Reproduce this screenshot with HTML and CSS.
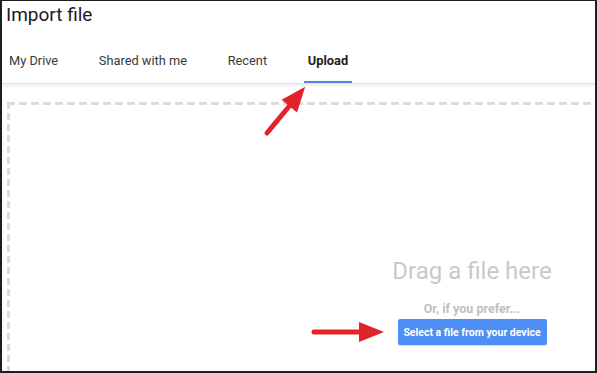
FILE: index.html
```html
<!DOCTYPE html>
<html lang="en">
<head>
  <meta charset="UTF-8">
  <meta name="viewport" content="width=device-width, initial-scale=1.0">
  <title>Import file</title>
  <link rel="stylesheet" href="styles.css">
</head>
<body>
  <div class="frame">
    <h1 class="title">Import file</h1>

    <!-- Source tabs -->
    <div class="tabs">
      <div class="tab">My Drive</div>
      <div class="tab">Shared with me</div>
      <div class="tab">Recent</div>
      <div class="tab active">Upload</div>
    </div>

    <!-- Upload drop zone -->
    <div class="content">
      <div class="dropzone">
        <p class="drag-text">Drag a file here</p>
        <p class="prefer">Or, if you prefer...</p>
        <button class="select-btn">Select a file from your device</button>
      </div>
    </div>

    <!-- Annotation arrows drawn over the screenshot -->
    <svg class="arrows" width="597" height="373" viewBox="0 0 597 373">
      <g transform="translate(267 133) rotate(-50.4)">
        <line x1="0" y1="0" x2="38" y2="0" stroke="#e2232a" stroke-width="5" stroke-linecap="round"/>
        <polygon points="35,-10 60,0 35,10" fill="#e2232a"/>
      </g>
      <g transform="translate(314 332)">
        <line x1="0" y1="0" x2="48" y2="0" stroke="#e2232a" stroke-width="5" stroke-linecap="round"/>
        <polygon points="45,-10 70,0 45,10" fill="#e2232a"/>
      </g>
    </svg>
  </div>
</body>
</html>
```

FILE: styles.css
```css
* {
  box-sizing: border-box;
}

body {
  margin: 0;
  background-color: #fff;
  font-family: Roboto, Arial, sans-serif;
}

.frame {
  position: relative;
  width: 597px;
  height: 373px;
  border: 2px solid #1e1e1e;
  border-top-width: 1px;
  overflow: hidden;
  background-color: #fff;
}

.title {
  margin: 0;
  padding: 2px 0 0 4px;
  font-size: 19px;
  font-weight: 400;
  line-height: 24px;
  color: #1a1a1a;
}

.tabs {
  display: flex;
  gap: 32.7px;
  padding: 26px 0 0 3px;
  border-bottom: 1px solid #e2e2e2;
  box-shadow: 0 2px 3px rgba(0, 0, 0, 0.08);
  position: relative;
}

.tab {
  padding: 0 4px 12px;
  font-size: 12.8px;
  line-height: 16px;
  color: #3a3a3a;
  border-bottom: 2px solid transparent;
}

.tab.active {
  font-weight: 700;
  color: #222;
  border-bottom-color: #4a86e8;
}

.content {
  padding: 18px 0 0 5px;
}

.dropzone {
  width: 930px;
  height: 400px;
  padding-top: 155px;
  display: flex;
  flex-direction: column;
  align-items: center;
  /* dashes drawn as gradients to get the short 8/4 rhythm */
  background-image:
    repeating-linear-gradient(to right, #dcdcdc 0 8px, transparent 8px 12px),
    repeating-linear-gradient(to bottom, #dcdcdc 0 7px, transparent 7px 11px);
  background-size: 100% 3px, 3px 100%;
  background-position: 0 0, 0 0;
  background-repeat: no-repeat;
}

.drag-text {
  margin: 0;
  font-size: 24px;
  line-height: 28px;
  color: #c9c9c9;
}

.prefer {
  margin: 16px 0 0;
  font-size: 12.5px;
  font-weight: 700;
  line-height: 15px;
  color: #bfbfbf;
}

.select-btn {
  margin-top: 3px;
  width: 149px;
  height: 26px;
  padding: 0;
  border: none;
  border-radius: 2px;
  background-color: #4d8ff4;
  color: #fff;
  font-family: Roboto, Arial, sans-serif;
  font-size: 10.5px;
  font-weight: 700;
  box-shadow: 0 1px 1px rgba(0, 0, 0, 0.15);
  cursor: pointer;
}

.arrows {
  position: absolute;
  top: -1px;
  left: -2px;
  pointer-events: none;
}
```
